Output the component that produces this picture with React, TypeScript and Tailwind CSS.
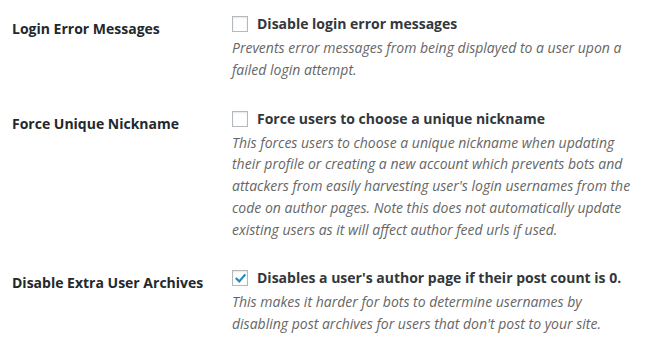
import React from "react";

type Row = {
  title: string;
  label: string;
  desc: string;
  checked: boolean;
};

const rows: Row[] = [
  {
    title: "Login Error Messages",
    label: "Disable login error messages",
    desc: "Prevents error messages from being displayed to a user upon a failed login attempt.",
    checked: false,
  },
  {
    title: "Force Unique Nickname",
    label: "Force users to choose a unique nickname",
    desc: "This forces users to choose a unique nickname when updating their profile or creating a new account which prevents bots and attackers from easily harvesting user's login usernames from the code on author pages. Note this does not automatically update existing users as it will affect author feed urls if used.",
    checked: false,
  },
  {
    title: "Disable Extra User Archives",
    label: "Disables a user's author page if their post count is 0.",
    desc: "This makes it harder for bots to determine usernames by disabling post archives for users that don't post to your site.",
    checked: true,
  },
];

function Checkbox({ checked }: { checked: boolean }) {
  return (
    <span className="relative mr-[9px] inline-block h-[16px] w-[16px] shrink-0 border border-[#b4b9be] bg-white shadow-[inset_0_1px_2px_rgba(0,0,0,0.1)]">
      {checked && (
        <svg
          className="absolute left-[1px] top-[1px]"
          width="13"
          height="13"
          viewBox="0 0 13 13"
        >
          <path
            d="M2.6 6.8 L5.3 9.4 L10.6 3.2"
            fill="none"
            stroke="#1e8cbe"
            strokeWidth="2.2"
            strokeLinecap="square"
          />
        </svg>
      )}
    </span>
  );
}

export default function App() {
  return (
    <div
      className="min-h-[353px] w-[653px] bg-white pl-[12px] pt-[1px] text-[14px] text-[#23282d]"
      style={{ fontFamily: '"Open Sans", "Noto Sans", sans-serif' }}
    >
      {rows.map((r) => (
        <div key={r.title} className="flex">
          <div className="w-[210px] shrink-0 pb-[20px] pr-[10px] pt-[19px] text-[14px] font-bold leading-[1.3]">
            {r.title}
          </div>
          <div className="w-[421px] px-[10px] pb-[15px] pt-[14px]">
            <label className="flex items-center text-[14px] font-bold leading-[1.3] text-[#32373c]">
              <Checkbox checked={r.checked} />
              <span>{r.label}</span>
            </label>
            <p className="mt-[4px] text-[14px] italic leading-[21.7px] text-[#666]">
              {r.desc}
            </p>
          </div>
        </div>
      ))}
    </div>
  );
}
